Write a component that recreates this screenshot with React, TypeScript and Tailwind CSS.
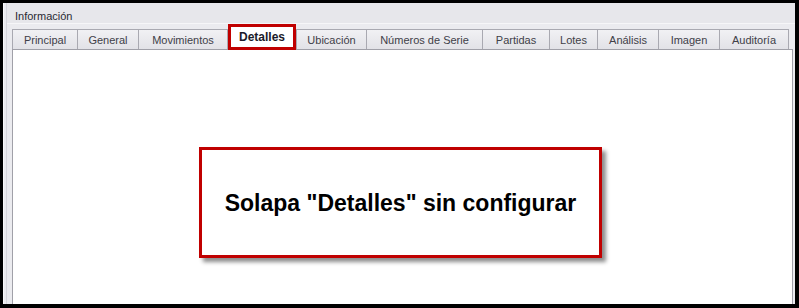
const tabs = [
  { label: "Principal", w: "w-[66px]" },
  { label: "General", w: "w-[61px]" },
  { label: "Movimientos", w: "w-[89px]" },
  { label: "Detalles", w: "w-[68px]", active: true },
  { label: "Ubicación", w: "w-[71px]" },
  { label: "Números de Serie", w: "w-[116px]" },
  { label: "Partidas", w: "w-[67px]" },
  { label: "Lotes", w: "w-[48px]" },
  { label: "Análisis", w: "w-[61px]" },
  { label: "Imagen", w: "w-[61px]" },
  { label: "Auditoría", w: "w-[69px]" },
];

function Tab({ label, w, active }: { label: string; w: string; active?: boolean }) {
  if (active) {
    return (
      <div
        className={`${w} relative z-10 -mb-px flex h-[26px] shrink-0 items-center justify-center border-[3px] border-[#c00000] bg-white text-[12px] font-bold text-[#1a1a2a]`}
      >
        {label}
      </div>
    );
  }
  return (
    <div
      className={`${w} flex h-[20px] shrink-0 items-center justify-center border border-b-0 border-[#a9a9b1] bg-gradient-to-b from-[#f1f1f4] to-[#e2e2e7] pt-px text-[11px] text-[#404048] [&+&]:border-l-0`}
    >
      {label}
    </div>
  );
}

export default function App() {
  return (
    <div
      className="flex h-[308px] w-[799px] bg-black pb-[4px] pl-[3px] pr-[4px] pt-[3px]"
      style={{ fontFamily: '"Liberation Sans", Arial, sans-serif' }}
    >
      <div className="flex flex-1 border-l border-[#f8f8fa] bg-[#ebebef]">
        <div className="ml-[2px] flex flex-1 flex-col border-l border-[#d6d6dc]">
          <div className="flex h-[21px] items-center border-b border-[#f6f6f8] bg-[#e7e7eb] pl-[8px] pt-[6px] text-[11px] text-[#2a2a33]">
            Información
          </div>
          <div className="flex flex-1 flex-col pl-[5px] pr-[2px]">
            <div className="flex h-[25px] items-end">
              {tabs.map((t) => (
                <Tab key={t.label} {...t} />
              ))}
            </div>
            <div className="flex-1 border border-b-0 border-[#a0a0a8] bg-white pt-[97px]">
              <div className="ml-[186px] flex h-[111px] w-[403px] items-center justify-center border-[3px] border-[#c00000] bg-white pt-px shadow-[4px_4px_4px_rgba(0,0,0,0.45)]">
                <span className="text-[23px] font-bold text-black">Solapa "Detalles" sin configurar</span>
              </div>
            </div>
          </div>
        </div>
      </div>
    </div>
  );
}
